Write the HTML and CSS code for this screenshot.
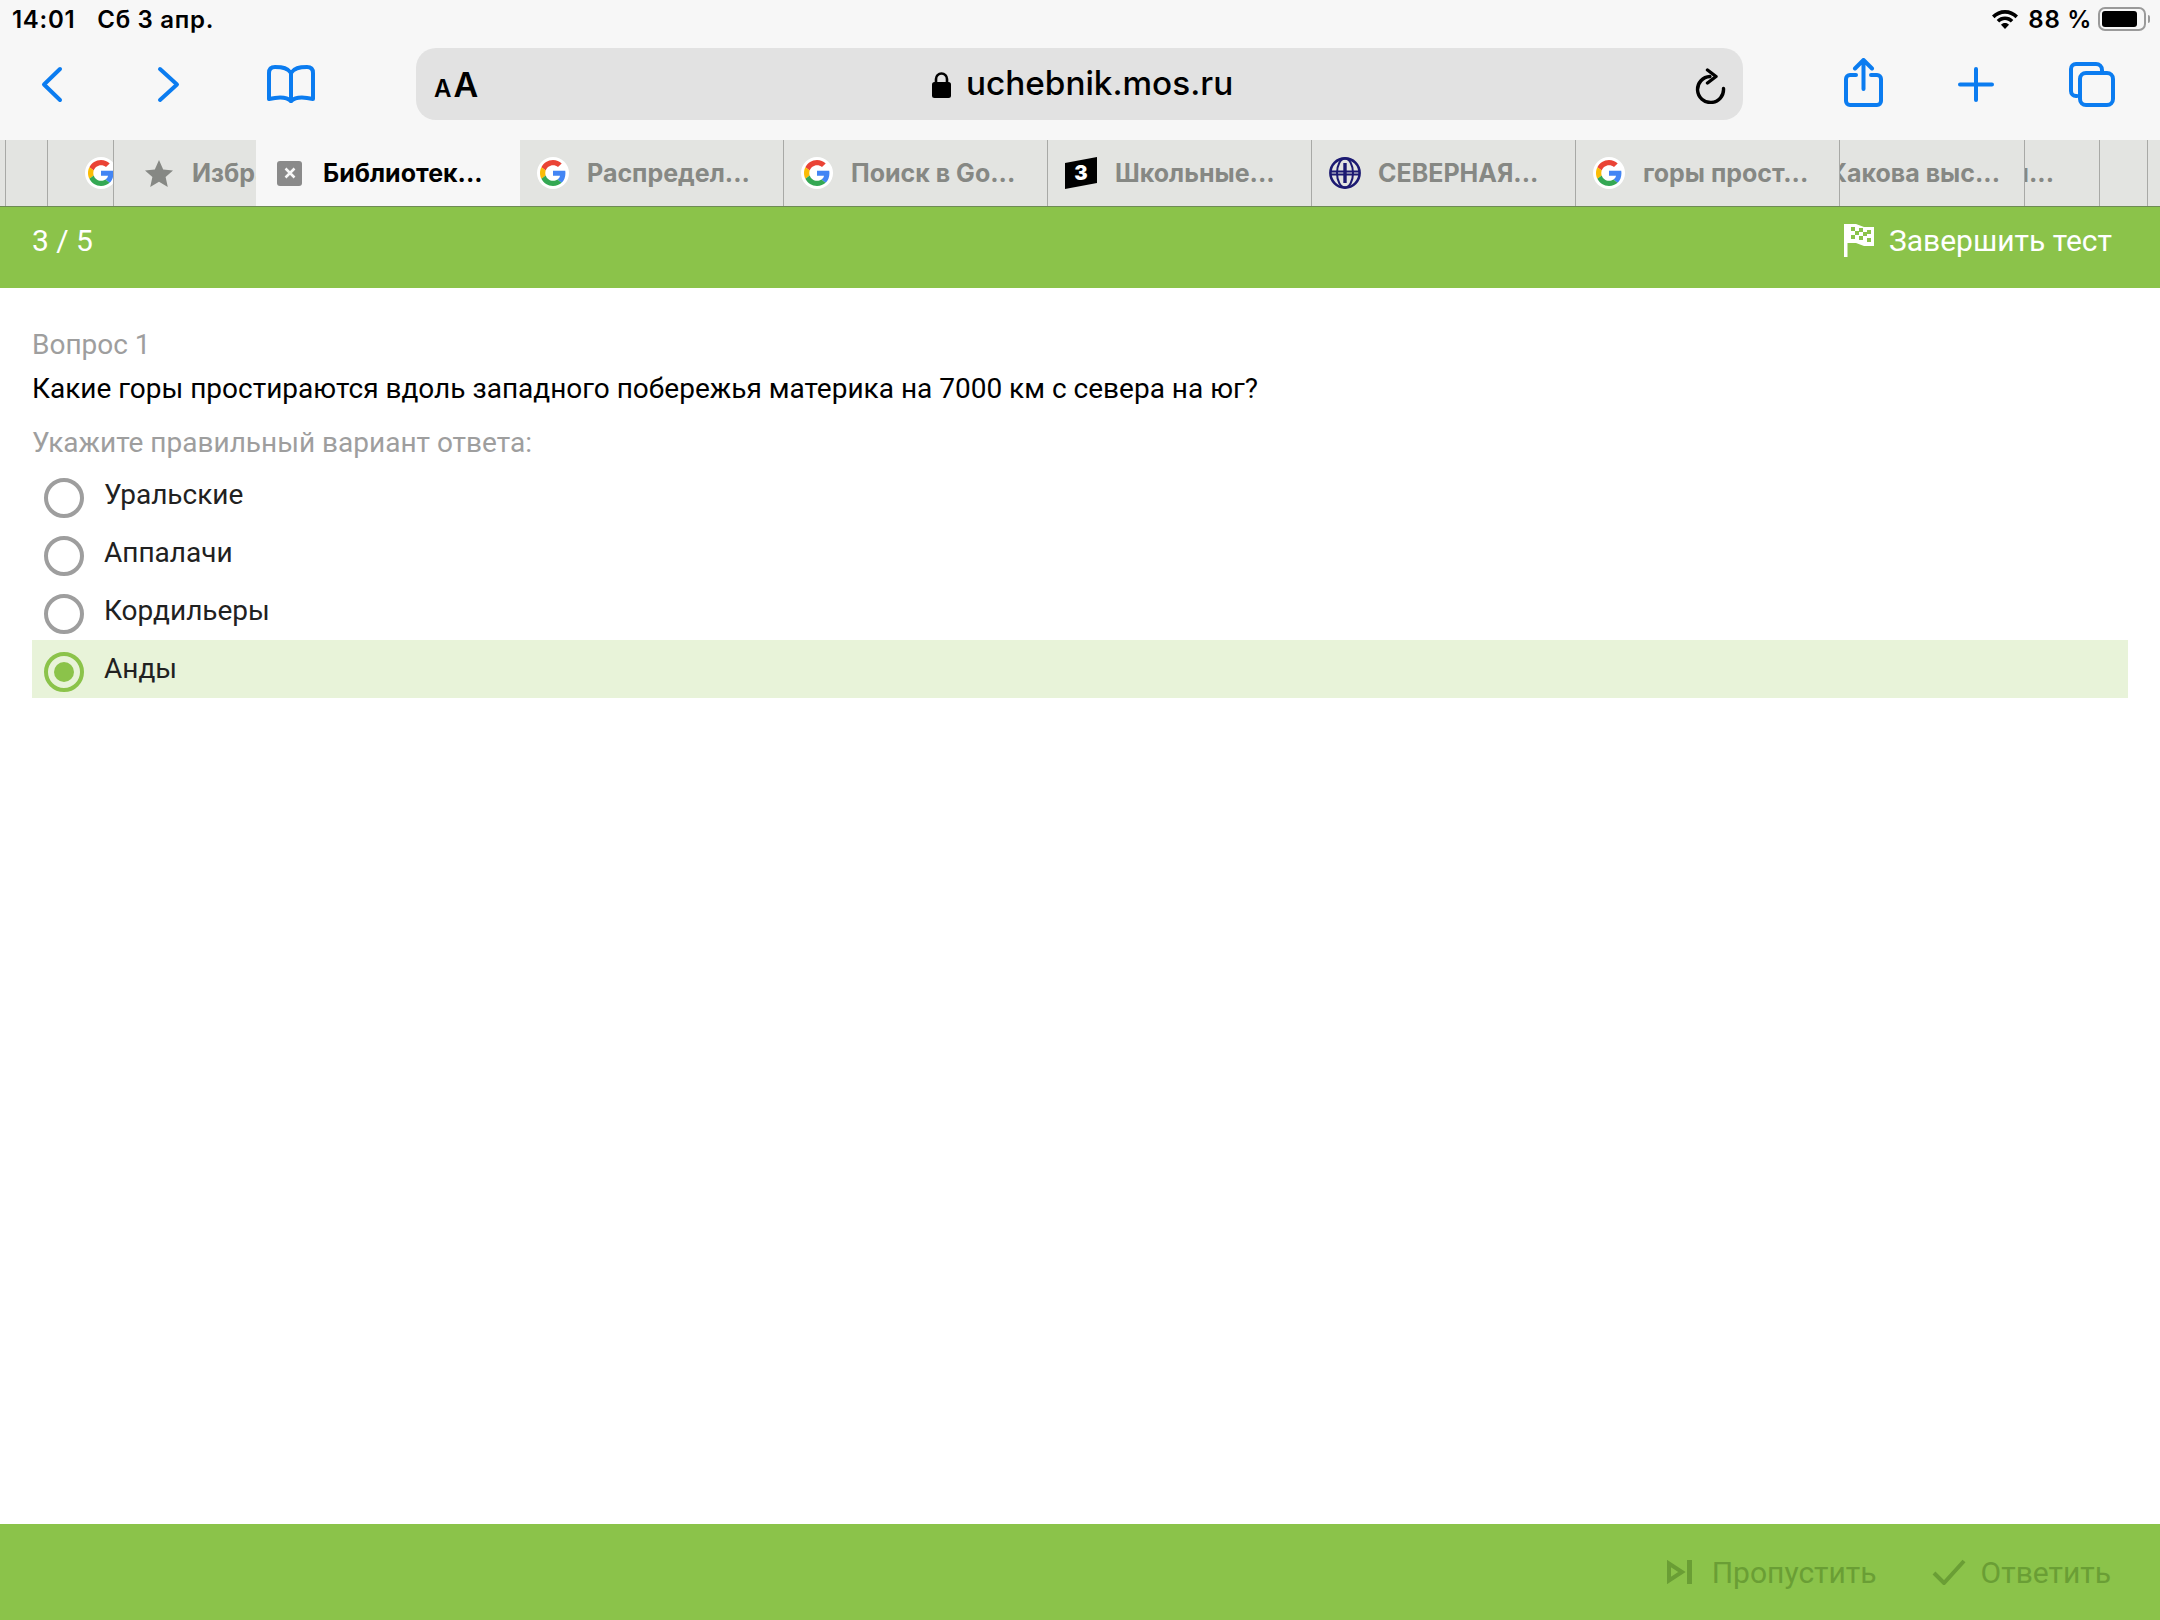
FILE: index.html
```html
<!DOCTYPE html>
<html lang="ru">
<head>
<meta charset="utf-8">
<title>uchebnik.mos.ru</title>
<link rel="stylesheet" href="styles.css">
</head>
<body>
<svg class="defs" width="0" height="0" aria-hidden="true">
  <defs>
    <symbol id="g" viewBox="0 0 48 48">
      <path fill="#EA4335" d="M24 9.500c3.540 0 6.710 1.220 9.210 3.600l6.850-6.850C35.900 2.380 30.470 0 24 0 14.620 0 6.510 5.380 2.560 13.220l7.980 6.190C12.430 13.720 17.740 9.500 24 9.500z"/>
      <path fill="#4285F4" d="M46.980 24.550c0-1.570-.15-3.090-.38-4.550H24v9.020h12.940c-.58 2.960-2.260 5.480-4.780 7.180l7.730 6c4.510-4.180 7.090-10.360 7.090-17.650z"/>
      <path fill="#FBBC05" d="M10.530 28.590c-.48-1.450-.76-2.990-.76-4.590s.27-3.140.76-4.590l-7.980-6.190C.92 16.460 0 20.120 0 24c0 3.880.92 7.540 2.560 10.780l7.970-6.190z"/>
      <path fill="#34A853" d="M24 48c6.480 0 11.930-2.130 15.890-5.810l-7.730-6c-2.150 1.450-4.920 2.300-8.160 2.300-6.260 0-11.570-4.220-13.470-9.910l-7.980 6.190C6.510 42.620 14.620 48 24 48z"/>
    </symbol>
  </defs>
</svg>

<header class="status">
  <div class="status-left"><span>14:01</span><span>Сб 3 апр.</span></div>
  <div class="status-right">
    <svg class="wifi" viewBox="0 0 28 21"><path d="M14 1C9 1 4.500 3 1 6.500l2.500 2.700C6.400 6.200 10 4.700 14 4.700s7.600 1.500 10.500 4.500L27 6.500C23.500 3 19 1 14 1z"/><path d="M14 7.500c-3.200 0-6.100 1.200-8.300 3.400l2.500 2.600C9.800 12 11.800 11.100 14 11.100s4.200.9 5.800 2.400l2.500-2.600C20.100 8.700 17.200 7.500 14 7.500z"/><path d="M14 14c-1.600 0-3 .6-4 1.700l4 4.300 4-4.300C17 14.600 15.600 14 14 14z"/></svg>
    <span class="pct">88 %</span>
    <span class="battery"><span class="battery-fill"></span></span><span class="battery-nub"></span>
  </div>
</header>

<nav class="toolbar">
  <svg class="ic back" viewBox="0 0 22 37"><path d="M19 3 3 18.500 19 34"/></svg>
  <svg class="ic fwd" viewBox="0 0 23 37"><path d="M3 3 20 18.500 3 34"/></svg>
  <svg class="ic book" viewBox="0 0 48 41"><path d="M24 37C20 33 14 32 2 35V9c0-4 2-6 6-6 8 0 13 1 16 6 3-5 8-6 16-6 4 0 6 2 6 6v26c-12-3-18-2-22 2z"/><path d="M24 9v28"/></svg>
  <div class="address">
    <span class="aa"><span class="aa-small">A</span><span class="aa-big">A</span></span>
    <span class="url">
      <svg class="lock" viewBox="0 0 19 26"><rect x="0" y="10" width="19" height="16" rx="2.500" fill="#000"/><path d="M4 11V7a5.500 5.500 0 0 1 11 0v4" fill="none" stroke="#000" stroke-width="2.600"/></svg>
      <span>uchebnik.mos.ru</span>
    </span>
    <svg class="reload" viewBox="0 0 31 36"><path d="M15 8.500A13 13 0 1 0 28.500 20.500" fill="none" stroke="#000" stroke-width="3.400" stroke-linecap="round"/><path d="M12.500 2 21 8.500 12.500 15" fill="none" stroke="#000" stroke-width="3.400" stroke-linecap="round" stroke-linejoin="round"/></svg>
  </div>
  <svg class="ic share" viewBox="0 0 39 49"><path d="M12 17H6a4 4 0 0 0-4 4v22a4 4 0 0 0 4 4h27a4 4 0 0 0 4-4V21a4 4 0 0 0-4-4h-6"/><path d="M19.500 31V3M11 10.500 19.500 2 28 10.500"/></svg>
  <svg class="ic plus" viewBox="0 0 36 35"><path d="M18 2v31M2 17.500h32"/></svg>
  <svg class="ic tabs-ic" viewBox="0 0 46 45"><path d="M8 34H7a5 5 0 0 1-5-5V7a5 5 0 0 1 5-5h20a6 6 0 0 1 6 6v2"/><rect x="11" y="11" width="33" height="32" rx="6"/></svg>
</nav>

<div class="tabbar">
  <div class="tab w6"></div>
  <div class="tab w42"></div>
  <div class="tab w66 end"><span class="fav fav-cut"><svg class="g"><use href="#g"/></svg></span></div>
  <div class="tab w142">
    <svg class="star" viewBox="0 0 28 27"><path d="M14 0l4.200 9.500 9.800.9-7.400 6.700 2.200 9.900-8.800-5.200-8.800 5.200 2.200-9.900L0 10.400l9.800-.9z"/></svg>
    <span class="label">Избранное</span>
  </div>
  <div class="tab active">
    <span class="closer"><svg viewBox="0 0 12 12"><path d="M1.500 1.500l9 9M10.500 1.500l-9 9"/></svg></span>
    <span class="label">Библиотек...</span>
  </div>
  <div class="tab w264"><span class="fav"><svg class="g"><use href="#g"/></svg></span><span class="label">Распредел...</span></div>
  <div class="tab w264"><span class="fav"><svg class="g"><use href="#g"/></svg></span><span class="label">Поиск в Go...</span></div>
  <div class="tab w264">
    <svg class="zn" viewBox="0 0 32 32"><path d="M0 6 32 0v26L0 32z" fill="#000"/><text x="16" y="23" text-anchor="middle" class="zn-text">3</text></svg>
    <span class="label">Школьные...</span>
  </div>
  <div class="tab w264">
    <svg class="globe" viewBox="0 0 32 32"><g fill="none" stroke="#1c1a72"><circle cx="16" cy="16" r="14.600" stroke-width="2.600"/><ellipse cx="16" cy="16" rx="8" ry="14.600" stroke-width="2"/><path d="M2 14.500h28M2 17.500h28" stroke-width="1.800"/><path d="M16 6v20" stroke-width="3.400"/></g></svg>
    <span class="label">СЕВЕРНАЯ...</span>
  </div>
  <div class="tab w264"><span class="fav"><svg class="g"><use href="#g"/></svg></span><span class="label">горы прост...</span></div>
  <div class="tab w185 end pr24"><span class="label">Какова выс...</span></div>
  <div class="tab w75 end pr45"><span class="label">вы...</span></div>
  <div class="tab w48"></div>
  <div class="tab w13"></div>
</div>

<section class="topbar">
  <span>3 / 5</span>
  <button class="topbar-btn" type="button">
    <svg class="flag" viewBox="0 0 30 34"><rect y="1" width="3.500" height="33" fill="#fff"/><path d="M3 1h9l8 3h10v19H20l-8-3H3z" fill="#fff"/><path d="M7 4h4v4H7zM15 5h4v4h-4zM23 7h4v4h-4zM11 8h4v4h-4zM19 9h4v4h-4zM7 12h4v4H7zM15 13h4v4h-4zM23 15h4v4h-4z" fill="#8bc34a"/></svg>
    Завершить тест
  </button>
</section>

<main class="content">
  <div class="muted">Вопрос 1</div>
  <div class="question">Какие горы простираются вдоль западного побережья материка на 7000 км с севера на юг?</div>
  <div class="muted hint">Укажите правильный вариант ответа:</div>
  <div class="options">
    <div class="option"><span class="radio"></span>Уральские</div>
    <div class="option"><span class="radio"></span>Аппалачи</div>
    <div class="option"><span class="radio"></span>Кордильеры</div>
    <div class="option selected"><span class="radio"></span>Анды</div>
  </div>
</main>

<footer class="bottombar">
  <button class="bottom-btn skip" type="button">
    <svg class="skip-ic" viewBox="0 0 25 24"><path d="M2 3.500v17L15 12z" fill="none" stroke="#6a9e35" stroke-width="4"/><rect x="20" y="0" width="5" height="24" fill="#6a9e35"/></svg>
    Пропустить
  </button>
  <button class="bottom-btn" type="button">
    <svg class="check-ic" viewBox="0 0 34 26"><path d="M2 14 12 24 32 2" fill="none" stroke="#6a9e35" stroke-width="4"/></svg>
    Ответить
  </button>
</footer>
</body>
</html>
```

FILE: styles.css
```css
* { box-sizing: border-box; }
html, body { margin: 0; height: 100%; }
body {
  width: 2160px;
  height: 1620px;
  display: flex;
  flex-direction: column;
  background: #fff;
  font-family: Roboto, "Liberation Sans", sans-serif;
  overflow: hidden;
}
.defs { position: absolute; }

/* status bar */
.status {
  height: 36px;
  flex: none;
  background: #f7f7f7;
  display: flex;
  justify-content: space-between;
  align-items: center;
  padding: 4px 10px 0 12px;
  font: 600 24px/1 Inter, "Liberation Sans", sans-serif;
  letter-spacing: 0.7px;
  color: #000;
}
.status-left { display: flex; gap: 22px; }
.status-right { display: flex; align-items: center; margin-top: -2px; }
.status-right .pct { margin-top: 2px; }
.wifi { width: 28px; height: 21px; fill: #000; margin-right: 9px; }
.pct { margin-right: 6px; }
.battery {
  width: 48px; height: 24px;
  border: 2px solid #9a9a9a;
  border-radius: 7px;
  padding: 2px;
  display: flex;
}
.battery-fill { width: 35px; background: #000; border-radius: 3px; }
.battery-nub { width: 2px; height: 8px; background: #9a9a9a; margin-left: 2px; border-radius: 0 2px 2px 0; }

/* toolbar */
.toolbar {
  height: 104px;
  flex: none;
  background: #f7f7f7;
  display: flex;
  align-items: flex-start;
}
.ic { fill: none; stroke: #0b7cf0; stroke-width: 4; stroke-linecap: round; stroke-linejoin: round; flex: none; }
.back { width: 22px; height: 37px; margin: 30px 0 0 41px; }
.fwd { width: 23px; height: 37px; margin: 30px 0 0 94px; }
.book { width: 48px; height: 41px; margin: 28px 0 0 87px; }
.address {
  width: 1327px;
  height: 72px;
  margin: 12px 0 0 101px;
  background: #e2e2e2;
  border-radius: 20px;
  display: flex;
  align-items: center;
  position: relative;
  padding: 0 17px 0 18px;
  justify-content: space-between;
  flex: none;
}
.aa { font: 600 35px/1 Inter, "Liberation Sans", sans-serif; color: #000; display: flex; align-items: baseline; gap: 2px; margin-top: 2px; }
.aa-small { font-size: 24px; }
.aa-big { font-size: 34px; }
.url {
  position: absolute;
  left: 516px;
  top: 0;
  height: 72px;
  display: flex;
  align-items: center;
  gap: 15px;
  font: 500 33.300px/1 Inter, "Liberation Sans", sans-serif;
  color: #000;
}
.lock { width: 19px; height: 26px; margin-top: 2px; }
.reload { width: 31px; height: 36px; margin: 3px 0 0; }
.share { width: 39px; height: 49px; margin: 22px 0 0 101px; }
.plus { width: 36px; height: 35px; margin: 31px 0 0 75px; }
.tabs-ic { width: 46px; height: 45px; margin: 26px 0 0 75px; }

/* tabs */
.tabbar {
  height: 67px;
  flex: none;
  display: flex;
  background: #e3e4e1;
  border-bottom: 1px solid #6e8a55;
}
.tab {
  flex: none;
  height: 66px;
  display: flex;
  align-items: center;
  overflow: hidden;
  border-right: 1px solid #a8a9a6;
  padding-left: 17px;
  background: #e3e4e1;
  font: 700 25px/1 Inter, "Liberation Sans", sans-serif;
  color: #868884;
}
.w6 { width: 6px; padding: 0; }
.w42 { width: 42px; padding: 0; }
.w66 { width: 66px; padding: 0; }
.w142 { width: 142px; padding-left: 31px; border-right: 0; }
.w264 { width: 264px; }
.w185 { width: 185px; padding: 0; }
.w75 { width: 75px; padding: 0; }
.w48 { width: 48px; padding: 0; }
.w13 { width: 13px; padding: 0; border-right: 0; }
.end { justify-content: flex-end; }
.pr24 { padding-right: 24px; }
.pr45 { padding-right: 45px; }
.active {
  width: 264px;
  background: #f7f7f7;
  color: #000;
  border-right: 0;
  padding-left: 21px;
}
.label { white-space: nowrap; flex: none; }
.fav {
  width: 32px; height: 32px;
  flex: none;
  background: #fff;
  border-radius: 50%;
  display: flex;
  align-items: center;
  justify-content: center;
  margin-right: 18px;
}
.fav-cut { margin: 0 -4px 0 0; }
.g { width: 26px; height: 26px; }
.star { width: 28px; height: 27px; fill: #868884; flex: none; margin-right: 19px; }
.closer {
  width: 25px; height: 25px;
  flex: none;
  background: #8a8a8a;
  border-radius: 3px;
  margin-right: 21px;
  display: flex;
  align-items: center;
  justify-content: center;
}
.closer svg { width: 12px; height: 12px; fill: none; stroke: #f7f7f7; stroke-width: 2.500; }
.zn { width: 32px; height: 32px; flex: none; margin-right: 18px; }
.zn-text { font: 900 20px Inter, sans-serif; fill: #fff; }
.globe { width: 32px; height: 32px; flex: none; margin-right: 17px; }

/* green header */
.topbar {
  height: 81px;
  flex: none;
  background: #8bc34a;
  color: #fff;
  display: flex;
  justify-content: space-between;
  align-items: center;
  padding: 0 48px 15px 32px;
  font-size: 30px;
}
.topbar-btn, .bottom-btn {
  border: 0;
  background: none;
  padding: 0;
  font: inherit;
  color: inherit;
  display: flex;
  align-items: center;
}
.flag { width: 30px; height: 34px; margin-right: 15px; }

/* content */
.content { flex: 1; padding: 37px 32px 0; font-size: 28px; line-height: 40px; }
.muted { color: #9e9e9e; }
.question { color: #000; margin-top: 4px; }
.hint { margin-top: 14px; }
.options { margin-top: 3px; }
.option {
  height: 58px;
  display: flex;
  align-items: center;
  color: #212121;
  padding-left: 12px;
}
.radio {
  width: 40px; height: 40px;
  border: 4px solid #9e9e9e;
  border-radius: 50%;
  flex: none;
  margin: 6px 20px 0 0;
  background: transparent;
}
.selected { background: #e8f3d9; }
.selected .radio {
  border-color: #8bc34a;
  padding: 6px;
  background: #8bc34a content-box;
}

/* footer */
.bottombar {
  height: 96px;
  flex: none;
  background: #8bc34a;
  color: #6a9e35;
  display: flex;
  justify-content: flex-end;
  align-items: center;
  padding: 0 49px 0 0;
  font-size: 30px;
}
.skip { margin-right: 55px; }
.skip-ic { width: 25px; height: 24px; margin-right: 20px; }
.check-ic { width: 34px; height: 26px; margin-right: 15px; }
```
